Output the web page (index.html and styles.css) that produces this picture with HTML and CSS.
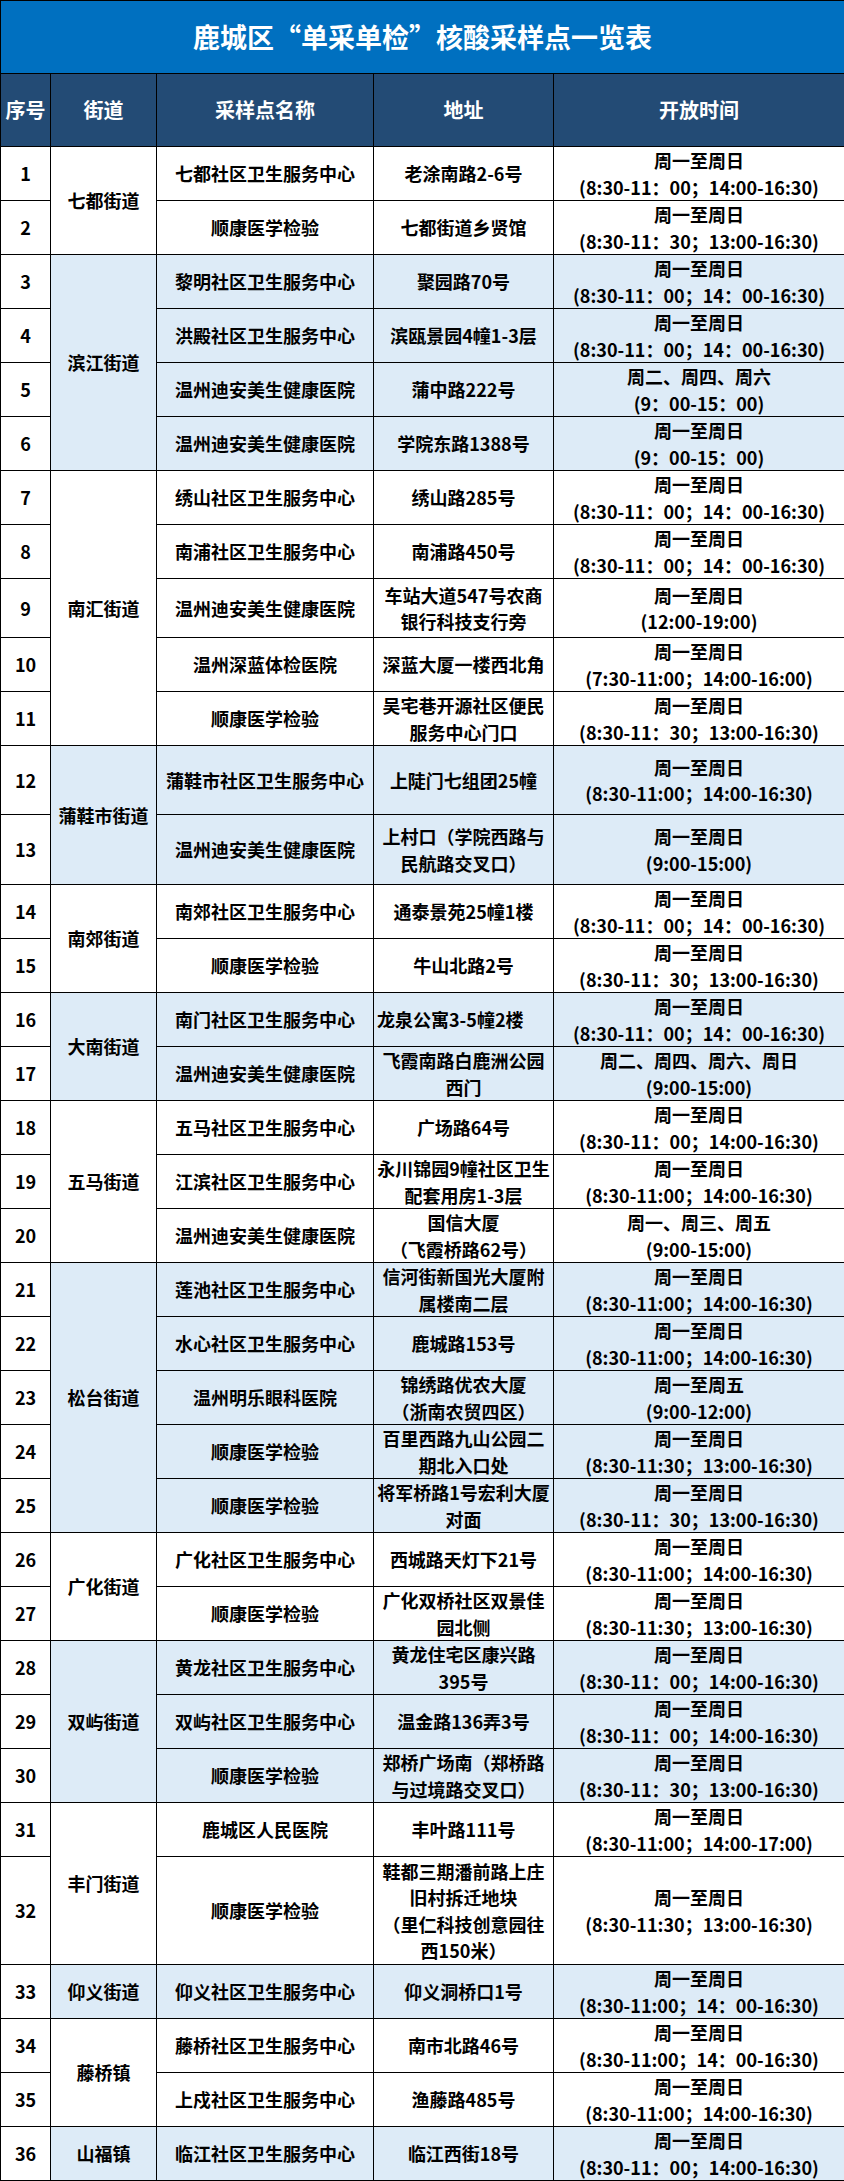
FILE: index.html
```html
<!DOCTYPE html>
<html lang="zh-CN">
<head>
<meta charset="utf-8">
<title>鹿城区“单采单检”核酸采样点一览表</title>
<link rel="stylesheet" href="styles.css">
</head>
<body>
<table class="sheet">
<colgroup>
<col class="c-num"><col class="c-street"><col class="c-name"><col class="c-addr"><col class="c-time">
</colgroup>
<thead>
<tr class="title-row"><th colspan="5">鹿城区“单采单检”核酸采样点一览表</th></tr>
<tr class="head-row"><th>序号</th><th>街道</th><th>采样点名称</th><th>地址</th><th>开放时间</th></tr>
</thead>
<tbody>
<tr><td class="num">1</td><td class="street" rowspan="2">七都街道</td><td>七都社区卫生服务中心</td><td>老涂南路2-6号</td><td>周一至周日<br>(8:30-11：00；14:00-16:30)</td></tr>
<tr><td class="num">2</td><td>顺康医学检验</td><td>七都街道乡贤馆</td><td>周一至周日<br>(8:30-11：30；13:00-16:30)</td></tr>

<tr class="blue"><td class="num">3</td><td class="street" rowspan="4">滨江街道</td><td>黎明社区卫生服务中心</td><td>聚园路70号</td><td>周一至周日<br>(8:30-11：00；14：00-16:30)</td></tr>
<tr class="blue"><td class="num">4</td><td>洪殿社区卫生服务中心</td><td>滨瓯景园4幢1-3层</td><td>周一至周日<br>(8:30-11：00；14：00-16:30)</td></tr>
<tr class="blue"><td class="num">5</td><td>温州迪安美生健康医院</td><td>蒲中路222号</td><td>周二、周四、周六<br>(9：00-15：00)</td></tr>
<tr class="blue"><td class="num">6</td><td>温州迪安美生健康医院</td><td>学院东路1388号</td><td>周一至周日<br>(9：00-15：00)</td></tr>

<tr><td class="num">7</td><td class="street" rowspan="5">南汇街道</td><td>绣山社区卫生服务中心</td><td>绣山路285号</td><td>周一至周日<br>(8:30-11：00；14：00-16:30)</td></tr>
<tr><td class="num">8</td><td>南浦社区卫生服务中心</td><td>南浦路450号</td><td>周一至周日<br>(8:30-11：00；14：00-16:30)</td></tr>
<tr class="h59"><td class="num">9</td><td>温州迪安美生健康医院</td><td>车站大道547号农商<br>银行科技支行旁</td><td>周一至周日<br>(12:00-19:00)</td></tr>
<tr><td class="num">10</td><td>温州深蓝体检医院</td><td>深蓝大厦一楼西北角</td><td>周一至周日<br>(7:30-11:00；14:00-16:00)</td></tr>
<tr><td class="num">11</td><td>顺康医学检验</td><td>吴宅巷开源社区便民<br>服务中心门口</td><td>周一至周日<br>(8:30-11：30；13:00-16:30)</td></tr>

<tr class="blue h69"><td class="num">12</td><td class="street" rowspan="2">蒲鞋市街道</td><td>蒲鞋市社区卫生服务中心</td><td>上陡门七组团25幢</td><td>周一至周日<br>(8:30-11:00；14:00-16:30)</td></tr>
<tr class="blue h70"><td class="num">13</td><td>温州迪安美生健康医院</td><td>上村口（学院西路与<br>民航路交叉口）</td><td>周一至周日<br>(9:00-15:00)</td></tr>

<tr><td class="num">14</td><td class="street" rowspan="2">南郊街道</td><td>南郊社区卫生服务中心</td><td>通泰景苑25幢1楼</td><td>周一至周日<br>(8:30-11：00；14：00-16:30)</td></tr>
<tr><td class="num">15</td><td>顺康医学检验</td><td>牛山北路2号</td><td>周一至周日<br>(8:30-11：30；13:00-16:30)</td></tr>

<tr class="blue"><td class="num">16</td><td class="street" rowspan="2">大南街道</td><td>南门社区卫生服务中心</td><td class="left">龙泉公寓3-5幢2楼</td><td>周一至周日<br>(8:30-11：00；14：00-16:30)</td></tr>
<tr class="blue"><td class="num">17</td><td>温州迪安美生健康医院</td><td>飞霞南路白鹿洲公园<br>西门</td><td>周二、周四、周六、周日<br>(9:00-15:00)</td></tr>

<tr><td class="num">18</td><td class="street" rowspan="3">五马街道</td><td>五马社区卫生服务中心</td><td>广场路64号</td><td>周一至周日<br>(8:30-11：00；14:00-16:30)</td></tr>
<tr><td class="num">19</td><td>江滨社区卫生服务中心</td><td>永川锦园9幢社区卫生<br>配套用房1-3层</td><td>周一至周日<br>(8:30-11:00；14:00-16:30)</td></tr>
<tr><td class="num">20</td><td>温州迪安美生健康医院</td><td>国信大厦<br>（飞霞桥路62号）</td><td>周一、周三、周五<br>(9:00-15:00)</td></tr>

<tr class="blue"><td class="num">21</td><td class="street" rowspan="5">松台街道</td><td>莲池社区卫生服务中心</td><td>信河街新国光大厦附<br>属楼南二层</td><td>周一至周日<br>(8:30-11:00；14:00-16:30)</td></tr>
<tr class="blue"><td class="num">22</td><td>水心社区卫生服务中心</td><td>鹿城路153号</td><td>周一至周日<br>(8:30-11:00；14:00-16:30)</td></tr>
<tr class="blue"><td class="num">23</td><td>温州明乐眼科医院</td><td>锦绣路优农大厦<br>（浙南农贸四区）</td><td>周一至周五<br>(9:00-12:00)</td></tr>
<tr class="blue"><td class="num">24</td><td>顺康医学检验</td><td>百里西路九山公园二<br>期北入口处</td><td>周一至周日<br>(8:30-11:30；13:00-16:30)</td></tr>
<tr class="blue"><td class="num">25</td><td>顺康医学检验</td><td>将军桥路1号宏利大厦<br>对面</td><td>周一至周日<br>(8:30-11：30；13:00-16:30)</td></tr>

<tr><td class="num">26</td><td class="street" rowspan="2">广化街道</td><td>广化社区卫生服务中心</td><td>西城路天灯下21号</td><td>周一至周日<br>(8:30-11:00；14:00-16:30)</td></tr>
<tr><td class="num">27</td><td>顺康医学检验</td><td>广化双桥社区双景佳<br>园北侧</td><td>周一至周日<br>(8:30-11:30；13:00-16:30)</td></tr>

<tr class="blue"><td class="num">28</td><td class="street" rowspan="3">双屿街道</td><td>黄龙社区卫生服务中心</td><td>黄龙住宅区康兴路<br>395号</td><td>周一至周日<br>(8:30-11：00；14:00-16:30)</td></tr>
<tr class="blue"><td class="num">29</td><td>双屿社区卫生服务中心</td><td>温金路136弄3号</td><td>周一至周日<br>(8:30-11：00；14:00-16:30)</td></tr>
<tr class="blue"><td class="num">30</td><td>顺康医学检验</td><td>郑桥广场南（郑桥路<br>与过境路交叉口）</td><td>周一至周日<br>(8:30-11：30；13:00-16:30)</td></tr>

<tr><td class="num">31</td><td class="street" rowspan="2">丰门街道</td><td>鹿城区人民医院</td><td>丰叶路111号</td><td>周一至周日<br>(8:30-11:00；14:00-17:00)</td></tr>
<tr class="h108"><td class="num">32</td><td>顺康医学检验</td><td>鞋都三期潘前路上庄<br>旧村拆迁地块<br>（里仁科技创意园往<br>西150米）</td><td>周一至周日<br>(8:30-11:30；13:00-16:30)</td></tr>

<tr class="blue"><td class="num">33</td><td class="street">仰义街道</td><td>仰义社区卫生服务中心</td><td>仰义洞桥口1号</td><td>周一至周日<br>(8:30-11:00；14：00-16:30)</td></tr>

<tr><td class="num">34</td><td class="street" rowspan="2">藤桥镇</td><td>藤桥社区卫生服务中心</td><td>南市北路46号</td><td>周一至周日<br>(8:30-11:00；14：00-16:30)</td></tr>
<tr><td class="num">35</td><td>上戍社区卫生服务中心</td><td>渔藤路485号</td><td>周一至周日<br>(8:30-11:00；14:00-16:30)</td></tr>

<tr class="blue"><td class="num">36</td><td class="street">山福镇</td><td>临江社区卫生服务中心</td><td>临江西街18号</td><td>周一至周日<br>(8:30-11：00；14:00-16:30)</td></tr>
</tbody>
</table>
</body>
</html>
```
FILE: styles.css
```css
html, body {
  margin: 0;
  padding: 0;
  background: #ffffff;
}

body {
  font-family: "Noto Sans CJK SC", "Noto Sans", "Liberation Sans", sans-serif;
  color: #000000;
}

.sheet {
  border-collapse: collapse;
  table-layout: fixed;
  width: 844px;
}

.c-num { width: 50px; }
.c-street { width: 106px; }
.c-name { width: 217px; }
.c-addr { width: 180px; }
.c-time { width: 291px; }

.sheet th,
.sheet td {
  border: 1px solid #000000;
  padding: 0;
  text-align: center;
  vertical-align: middle;
  font-weight: 700;
  font-size: 18px;
  line-height: 26.5px;
  white-space: nowrap;
  overflow: hidden;
}

.title-row { height: 73px; }
.title-row th {
  background: #0070c0;
  color: #ffffff;
  font-size: 27px;
  line-height: 36px;
}

.head-row { height: 73px; }
.head-row th {
  background: #234b75;
  color: #ffffff;
  font-size: 20px;
}

.sheet tbody tr { height: 54px; }
.sheet tbody tr.h59 { height: 59px; }
.sheet tbody tr.h69 { height: 69px; }
.sheet tbody tr.h70 { height: 70px; }
.sheet tbody tr.h108 { height: 108px; }

.sheet tr.blue td { background: #ddebf7; }
.sheet tr.blue td.num { background: #ffffff; }

.sheet td.left {
  text-align: left;
  padding-left: 3px;
}
```
